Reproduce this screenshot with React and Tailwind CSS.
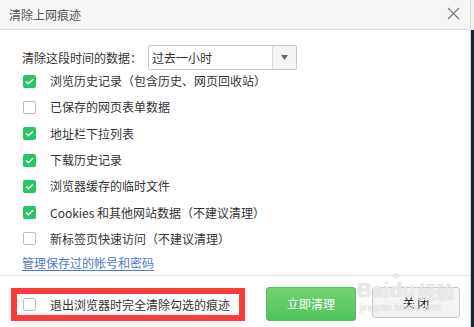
import { useState } from "react";

const options = [
  { label: "浏览历史记录（包含历史、网页回收站）", checked: true },
  { label: "已保存的网页表单数据", checked: false },
  { label: "地址栏下拉列表", checked: true },
  { label: "下载历史记录", checked: true },
  { label: "浏览器缓存的临时文件", checked: true },
  { label: "Cookies 和其他网站数据（不建议清理）", checked: true },
  { label: "新标签页快速访问（不建议清理）", checked: false },
];

function Check({ on, onClick }) {
  return (
    <span
      onClick={onClick}
      className={
        on
          ? "flex h-[13px] w-[13px] shrink-0 items-center justify-center rounded-[2px] bg-[#27c765]"
          : "flex h-[13px] w-[13px] shrink-0 items-center justify-center rounded-[2px] border border-[#bdbdbd] bg-white"
      }
    >
      {on && (
        <svg width="9" height="7" viewBox="0 0 9 7" fill="none">
          <path d="M1 3.5 L3.4 5.8 L8 1.2" stroke="#fff" strokeWidth="1.4" />
        </svg>
      )}
    </span>
  );
}

export default function App() {
  const [items, setItems] = useState(options.map((o) => o.checked));
  const [onExit, setOnExit] = useState(false);

  return (
    <div className="flex h-[327px] w-[474px] overflow-hidden bg-white font-['Noto_Sans_CJK_SC','Noto_Sans',sans-serif] text-[12px] text-[#333]">
      <div className="relative flex w-[471px] flex-col border-r border-[#d6d6d6]">
        {/* title bar */}
        <div className="flex h-[30px] shrink-0 items-center justify-between border-b border-[#dcdcdc] bg-[#f6f6f6] pl-[9px] pr-[10px]">
          <span className="text-[#555]">清除上网痕迹</span>
          <svg width="13" height="13" viewBox="0 0 13 13" className="mb-[2px]">
            <path d="M1 1 L12 12 M12 1 L1 12" stroke="#777" strokeWidth="1.1" />
          </svg>
        </div>

        {/* time range */}
        <div className="mt-[15px] flex h-[25px] items-center pl-[22px]">
          <span className="w-[126px]">清除这段时间的数据：</span>
          <div className="flex h-[25px] w-[149px] items-center rounded-[2px] border border-[#c9c9c9]">
            <span className="flex-1 pl-[3px]">过去一小时</span>
            <span className="flex h-full w-[24px] items-center justify-center border-l border-[#dedede] bg-[#f5f5f5]">
              <svg width="7" height="5" viewBox="0 0 7 5">
                <path d="M0 0 H7 L3.5 5 Z" fill="#666" />
              </svg>
            </span>
          </div>
        </div>

        {/* options */}
        <div className="mt-[-2px] flex flex-col pl-[23px]">
          {options.map((o, i) => (
            <div key={o.label} className="flex h-[26.3px] items-center gap-[14px]">
              <Check
                on={items[i]}
                onClick={() => setItems(items.map((v, j) => (j === i ? !v : v)))}
              />
              <span>{o.label}</span>
            </div>
          ))}
        </div>

        <div className="flex h-[22px] items-center pl-[22px]">
          <a className="text-[#4a78d0] underline underline-offset-2">管理保存过的帐号和密码</a>
        </div>

        {/* footer */}
        <div className="mt-[1px] flex flex-1 items-start border-t border-[#e6e6e6] pl-[11px] pt-[11px]">
          <div className="mt-[1px] flex h-[33px] w-[234px] items-center border-[6px] border-[#ff3b3b] pl-[6px]">
            <Check on={onExit} onClick={() => setOnExit(!onExit)} />
            <span className="ml-[14px]">退出浏览器时完全清除勾选的痕迹</span>
          </div>
          <button className="ml-[21px] flex h-[34px] w-[90px] items-center justify-center rounded-[3px] border border-[#52bd5c] bg-gradient-to-b from-[#74d270] to-[#4cc45a] text-[12px] text-white">
            立即清理
          </button>
          <button className="ml-[16px] flex h-[31px] w-[88px] items-center justify-center rounded-[3px] border border-[#c9c9c9] bg-[#f4f4f4] text-[12px] text-[#222]">
            关&nbsp;闭
          </button>
        </div>

        {/* watermark */}
        <div className="pointer-events-none absolute left-[357px] top-[279px] flex flex-col items-start leading-none text-white/70 [text-shadow:0_0_1px_#b8b8b8]">
          <div className="flex items-end font-['Liberation_Sans',sans-serif] text-[21px] font-bold">
            <span>Bai</span>
            <span className="relative">
              <span className="absolute -top-[9px] left-[3px] text-[11px]">●</span>
              du
            </span>
            <span className="ml-[3px] font-['Noto_Sans_CJK_SC',sans-serif] text-[18px]">经验</span>
          </div>
          <span className="mt-[3px] pl-[3px] font-['Liberation_Sans',sans-serif] text-[10px]">jingyan.baidu.com</span>
        </div>
      </div>
      <div className="flex w-[3px] flex-col">
        <div className="h-[30px] bg-[#f0f0f0]" />
        <div className="flex-1 bg-[#14243a]" />
      </div>
    </div>
  );
}
